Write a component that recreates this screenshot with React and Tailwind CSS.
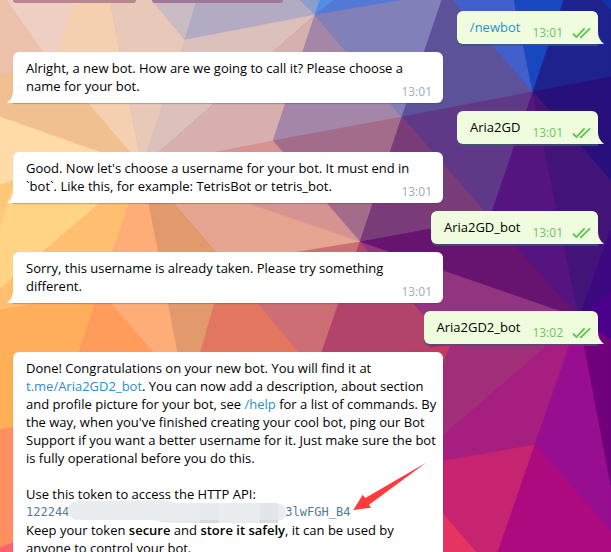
const FACETS = [
  ["#edc0ac", "0,0 7,0 45,52 110,140 0,80"],
  ["#efcfc4", "7,0 74,0 55,70 45,54"],
  ["#f4d0b0", "74,0 110,0 142,167 45,54 56,60"],
  ["#e8c8b8", "110,0 152,0 185,40 142,167"],
  ["#c9bcc4", "152,0 197,0 185,40"],
  ["#b3aac4", "197,0 306,0 315,15 185,40"],
  ["#8b9fce", "300,0 320,0 315,15"],
  ["#4f8fe8", "320,0 334,0 315,15"],
  ["#5478d8", "334,0 403,0 315,15"],
  ["#dcc0bb", "185,40 315,15 142,167"],
  ["#d6afae", "315,15 273,141 142,167"],
  ["#a487a8", "315,15 402,117 273,141"],
  ["#8280b8", "403,0 442,0 402,117 315,15"],
  ["#5c529a", "442,0 455,0 533,92 402,117"],
  ["#4260cc", "453,0 514,0 533,92"],
  ["#1748c0", "514,0 564,0 533,92"],
  ["#1e228c", "564,0 611,0 611,77 533,92"],
  ["#1333a8", "602,0 611,0 611,9"],
  ["#27107c", "533,92 611,77 611,181"],
  ["#5f3888", "402,117 533,92 490,218"],
  ["#551480", "533,92 579,318 490,218"],
  ["#431478", "533,92 611,181 611,230 579,318"],
  ["#3c0880", "611,230 611,291 579,318"],
  ["#4a008c", "611,291 611,340 579,318"],
  ["#a36c8a", "273,141 402,117 360,242"],
  ["#7a3c78", "402,117 490,218 360,242"],
  ["#661470", "360,242 490,218 579,318"],
  ["#933480", "360,242 579,318 443,436 430,330"],
  ["#f0c090", "0,75 30,70 50,58 142,167 0,117"],
  ["#ffdba8", "0,117 142,167 0,190"],
  ["#ffd484", "0,185 142,167 43,252 0,290"],
  ["#ffc878", "0,185 14,180 0,226"],
  ["#ffbf70", "142,167 95,303 0,312 0,289"],
  ["#d59492", "142,167 273,141 360,242"],
  ["#e5a590", "142,167 360,242 226,264"],
  ["#ffad78", "142,167 187,395 95,303"],
  ["#e2996c", "142,167 226,264 187,400"],
  ["#ffae5c", "0,310 99,292 70,380 0,380"],
  ["#ff9c5c", "99,292 104,296 180,383 70,380"],
  ["#e27660", "226,264 320,372 187,400"],
  ["#cc6e74", "226,264 360,242 315,372"],
  ["#b2446c", "360,242 440,335 443,380 315,372"],
  ["#a02e78", "425,317 579,318 443,436"],
  ["#c03c60", "400,353 450,345 443,362"],
  ["#a51e80", "579,318 535,445 443,461 443,436"],
  ["#980e90", "579,318 592,390 611,485 611,531 535,445"],
  ["#70007c", "579,318 611,340 611,485"],
  ["#c62470", "443,461 535,445 498,552 440,552"],
  ["#ae0a80", "535,445 611,531 611,552 498,552"],
  ["#e63462", "443,514 476,552 443,552"],
  ["#ffaf55", "0,350 20,350 20,426 0,430"],
  ["#ff8f60", "0,430 20,426 20,552 0,552"],
  ["#ff6070", "0,548 20,540 20,552 0,552"],
];

function Wallpaper() {
  return (
    <svg
      className="absolute inset-0 h-full w-full"
      viewBox="0 0 611 552"
      preserveAspectRatio="xMidYMid slice"
      aria-hidden="true"
    >
      {FACETS.map(([color, points]) => (
        <polygon key={points} points={points} fill={color} stroke={color} strokeWidth="0.8" strokeLinejoin="round" />
      ))}
    </svg>
  );
}

function Ticks() {
  return (
    <svg className="h-3 w-5" viewBox="0 0 20 12" fill="none" stroke="#5dc452" strokeWidth="1.8" aria-hidden="true">
      <path d="M2 6.6 5.4 10 13.6 1.4" />
      <path d="M9 10.2 10.2 10.2 19 1.4" />
    </svg>
  );
}

function BotMessage({ time, tail = true, children }) {
  return (
    <div
      className={`relative grid w-full max-w-[430px] rounded-md bg-white pt-[7px] pr-1 pb-2 pl-[13px] shadow-[0_1px_1px_rgba(90,60,60,0.35)] ${
        tail ? "rounded-bl-none" : ""
      }`}
    >
      <div className="col-start-1 row-start-1">{children}</div>
      {time && (
        <time className="col-start-1 row-start-1 mr-[7px] -mb-[5px] self-end justify-self-end text-[12px] leading-4 text-[#a0acb6]">
          {time}
        </time>
      )}
      {tail && (
        <svg className="absolute bottom-0 -left-1.5 h-3 w-1.5" viewBox="0 0 6 12" fill="#fff" aria-hidden="true">
          <path d="M6 0C6 5 4 9 0 12H6Z" />
        </svg>
      )}
    </div>
  );
}

function UserMessage({ time, children }) {
  return (
    <div className="relative flex self-end rounded-md rounded-br-none bg-[#effdde] pt-[7px] pr-[7px] pb-2 pl-[13px] shadow-[0_2px_0_rgba(60,90,110,0.7)]">
      <div>{children}</div>
      <div className="-mb-[5px] ml-3 flex items-center gap-2 self-end text-[12px] leading-4 text-[#6cc264]">
        <time>{time}</time>
        <Ticks />
      </div>
      <svg className="absolute -right-1.5 bottom-0 h-3 w-1.5" viewBox="0 0 6 12" fill="#effdde" aria-hidden="true">
        <path d="M0 0C0 5 2 9 6 12H0Z" />
      </svg>
    </div>
  );
}

function Link({ href, children }) {
  return (
    <a href={href} className="text-[#2a8fcf]">
      {children}
    </a>
  );
}

function Token() {
  return (
    <div className="flex h-[18px] items-center font-['DejaVu_Sans_Mono','Liberation_Mono',monospace] text-[12px] text-[#4f7c97]">
      <span>122244</span>
      <svg className="z-10 -mr-0.5 -ml-0.5 h-6 w-[220px] shrink-0" viewBox="0 0 222 24" aria-hidden="true">
        <path
          d="M11 1 95 0Q104 1 110 3H211Q221 4 221 13 221 20 213 21V23H134L96 22Q90 20 86 20H9Q1 17 0 10 3 2 11 1Z"
          fill="#e9edf0"
        />
        <path d="M134 3H153V23H134Z" fill="#e6e9ec" />
        <path d="M194 3H211L213 5V23H194Z" fill="#e3e6e9" />
        <path d="M96 21H134V23L96 22Z" fill="#e2e5e7" />
        <path d="M134 20H153V23H134ZM194 20H213V23H194Z" fill="#d9dbdd" />
      </svg>
      <span>3lwFGH_B4</span>
    </div>
  );
}

function Arrow() {
  return (
    <svg className="absolute top-[110px] left-[340px] h-12 w-[74px]" viewBox="0 0 74 48" fill="#ff3b3b" aria-hidden="true">
      <path d="M0.3 48 9.7 32.7 12.3 36 73 0.7 16 42.7 18 45.7Z" />
    </svg>
  );
}

export default function App() {
  return (
    <main className="relative h-screen overflow-hidden bg-[#a02e78] font-['Open_Sans','Noto_Sans',sans-serif] text-[13px] leading-[18px] text-black">
      <Wallpaper />
      <div className="relative flex flex-col gap-2 px-[13px]">
        <div className="flex gap-4">
          <div className="h-[3px] w-[123px] rounded-b-md bg-[#b8868f]" />
          <div className="h-[3px] w-[131px] rounded-b-md bg-[#9e7897]" />
        </div>

        <UserMessage time="13:01">
          <Link href="#newbot">/newbot</Link>
        </UserMessage>
        <BotMessage time="13:01">
          Alright, a new bot. How are we going to call it? Please choose a name for your bot.
        </BotMessage>
        <UserMessage time="13:01">Aria2GD</UserMessage>
        <BotMessage time="13:01">
          Good. Now let's choose a username for your bot. It must end in `bot`. Like this, for
          example: TetrisBot or tetris_bot.
        </BotMessage>
        <UserMessage time="13:01">Aria2GD_bot</UserMessage>
        <BotMessage time="13:01">
          Sorry, this username is already taken. Please try something different.
        </BotMessage>
        <UserMessage time="13:02">Aria2GD2_bot</UserMessage>
        <BotMessage tail={false}>
          <p>
            Done! Congratulations on your new bot. You will find it at{" "}
            <Link href="#bot">t.me/Aria2GD2_bot</Link>. You can now add a description, about section
            and profile picture for your bot, see <Link href="#help">/help</Link> for a list of
            commands. By the way, when you've finished creating your cool bot, ping our Bot Support
            if you want a better username for it. Just make sure the bot is fully operational before
            you do this.
          </p>
          <p className="mt-[18px]">Use this token to access the HTTP API:</p>
          <Token />
          <p>
            Keep your token <strong className="font-semibold">secure</strong> and{" "}
            <strong className="font-semibold">store it safely</strong>, it can be used by anyone to
            control your bot.
          </p>
          <Arrow />
        </BotMessage>
      </div>
    </main>
  );
}
